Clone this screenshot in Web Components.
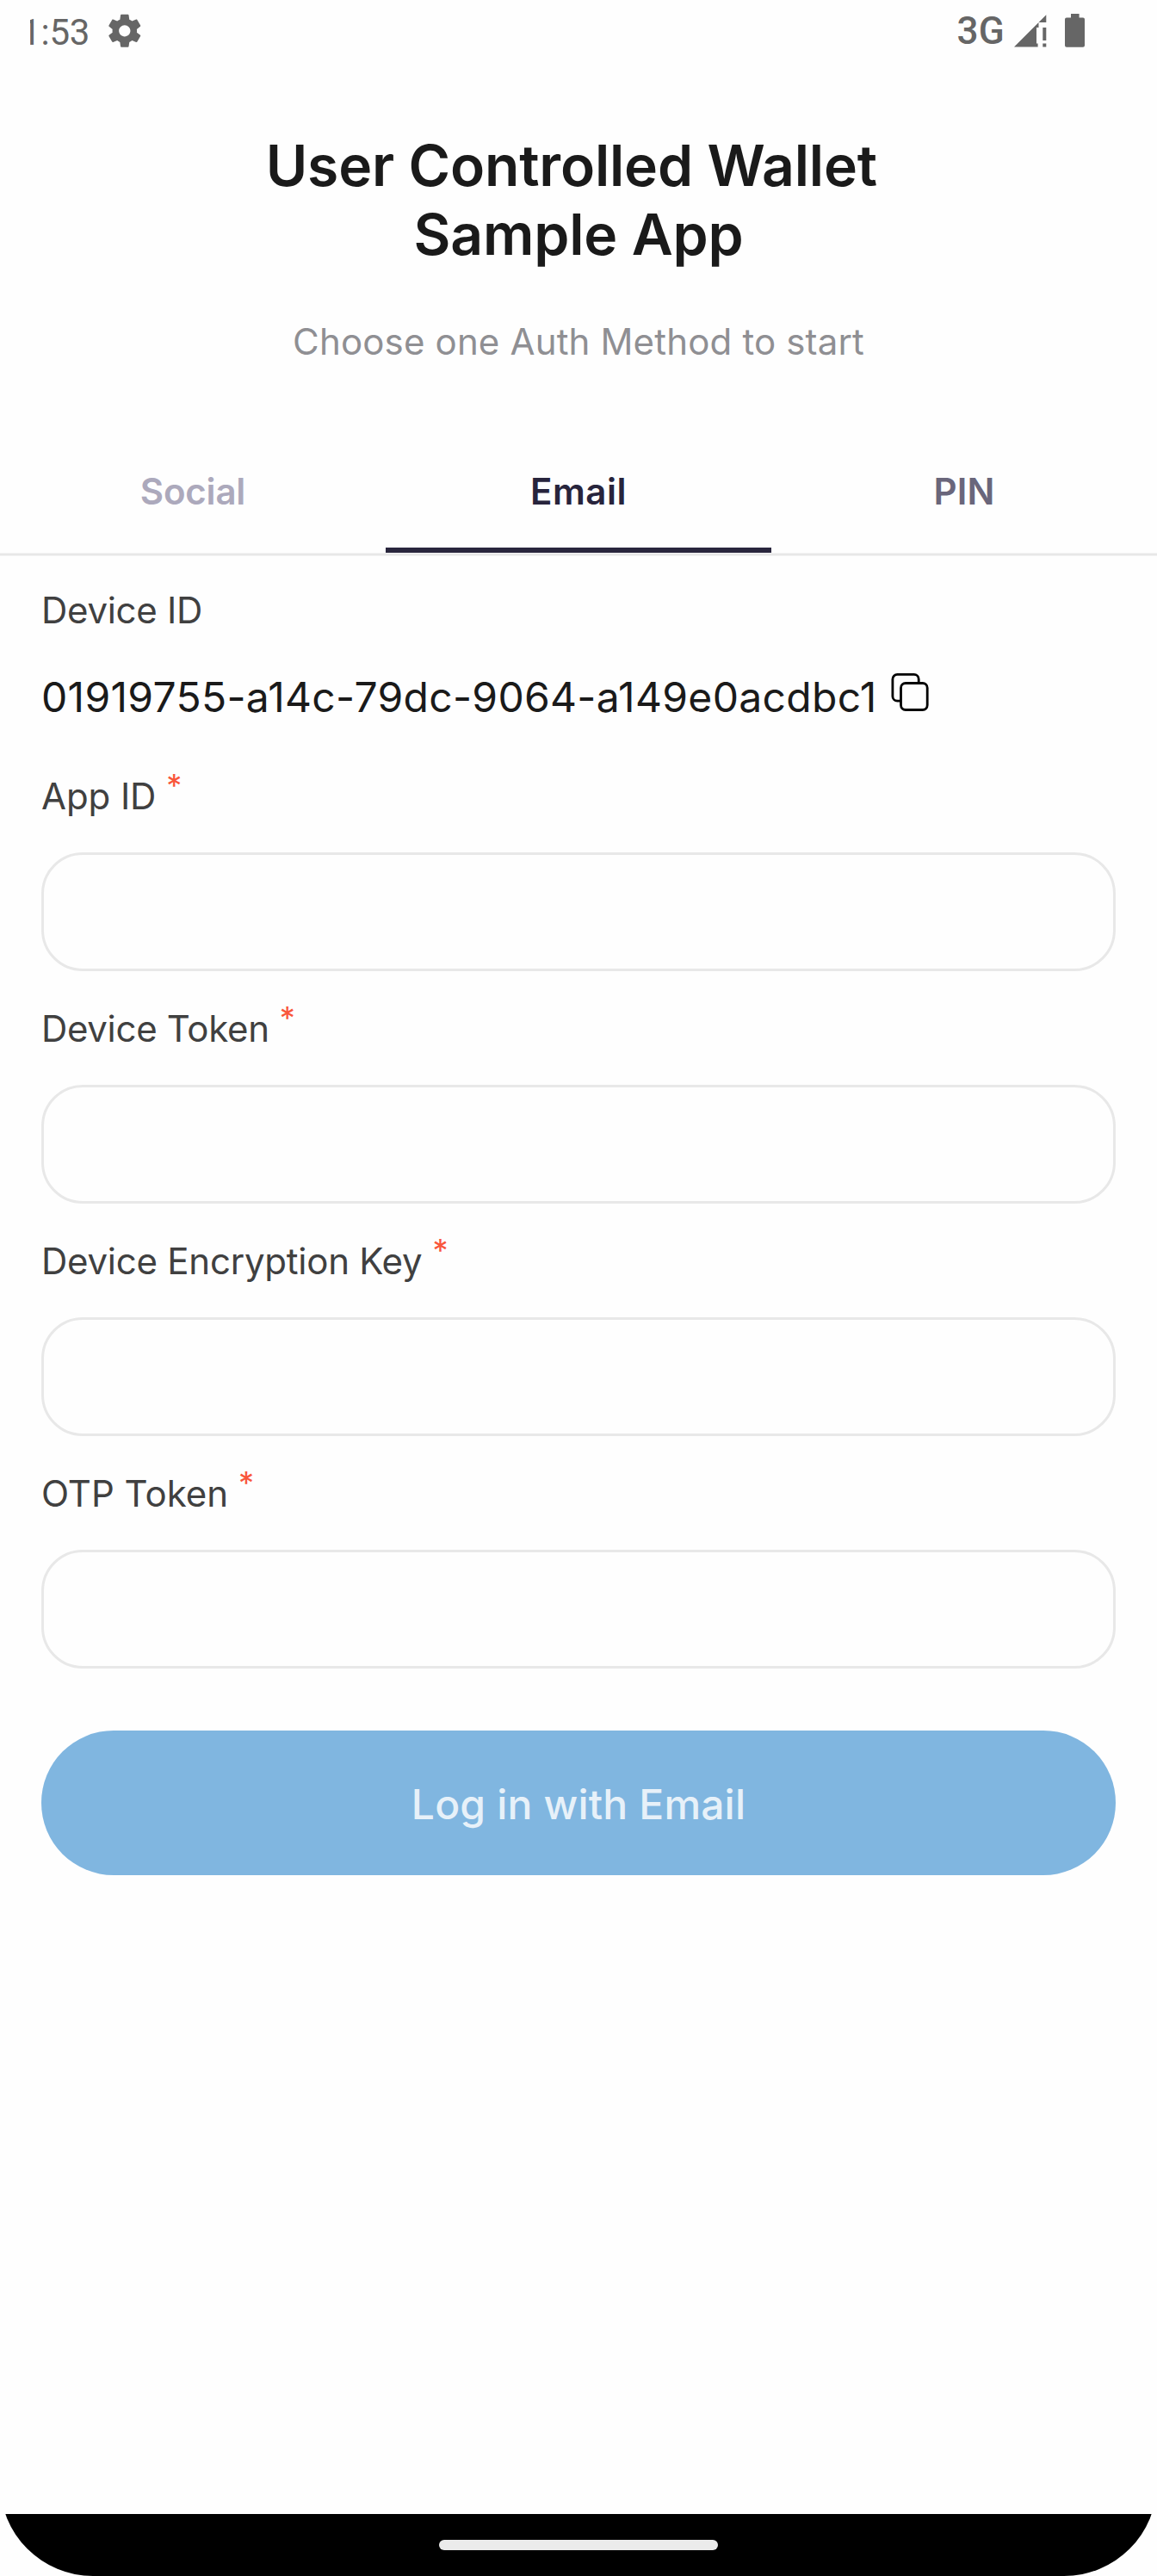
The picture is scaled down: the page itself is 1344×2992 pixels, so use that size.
<!DOCTYPE html>
<html lang="en">
<head>
<meta charset="utf-8">
<title>User Controlled Wallet Sample App</title>
<style>
  html, body { margin: 0; padding: 0; background: #fefefe; }
  body { width: 1344px; height: 2992px; overflow: hidden; font-family: Inter, "Liberation Sans", sans-serif; }
</style>
</head>
<body>
<wallet-app></wallet-app>
<script>
const define = (name, html) => {
  const template = document.createElement('template');
  template.innerHTML = html;
  customElements.define(name, class extends HTMLElement {
    constructor() {
      super();
      this.attachShadow({ mode: 'open' }).append(template.content.cloneNode(true));
    }
  });
};

define('status-bar', `
<style>
  :host { display: flex; height: 72px; padding: 0 84px 0 35px; justify-content: space-between; color: #666; fill: #666; font: 400 42px/75px Roboto, sans-serif; }
  div { display: flex; height: 72px; }
  .clock { overflow: hidden; letter-spacing: -.2px; }
  .clock span { margin-left: -11px; }
  .gear { margin: 13px 0 0 18px; }
  .net { font-size: 44px; font-weight: 500; letter-spacing: .3px; line-height: 73px; }
  .signal { margin: 16px 0 0 11px; }
  .battery { margin: 16px 0 0 21px; }
  svg { display: block; flex: none; }
</style>
<div><span class="clock"><span>1:53</span></span>
  <svg class="gear" width="45.6" height="45.6" viewBox="0 0 24 24"><path d="M19.43 12.98c.04-.32.07-.64.07-.98s-.03-.66-.07-.98l2.11-1.65c.19-.15.24-.42.12-.64l-2-3.46c-.12-.22-.39-.3-.61-.22l-2.49 1c-.52-.4-1.08-.73-1.69-.98l-.38-2.65C14.46 2.18 14.25 2 14 2h-4c-.25 0-.46.18-.49.42l-.38 2.65c-.61.25-1.17.59-1.69.98l-2.49-1c-.23-.09-.49 0-.61.22l-2 3.46c-.13.22-.07.49.12.64l2.11 1.65c-.04.32-.07.65-.07.98s.03.66.07.98l-2.11 1.65c-.19.15-.24.42-.12.64l2 3.46c.12.22.39.3.61.22l2.49-1c.52.4 1.08.73 1.69.98l.38 2.65c.03.24.24.42.49.42h4c.25 0 .46-.18.49-.42l.38-2.65c.61-.25 1.17-.59 1.69-.98l2.49 1c.23.09.49 0 .61-.22l2-3.46c.12-.22.07-.49-.12-.64l-2.11-1.65zM12 15.5c-1.93 0-3.5-1.57-3.5-3.5s1.57-3.5 3.5-3.5 3.5 1.57 3.5 3.5-1.57 3.5-3.5 3.5z"/></svg>
</div>
<div><span class="net">3G</span>
  <svg class="signal" width="38" height="39" viewBox="0 0 38 39"><path d="M0 38.5 37.3 1.2V10H28.5V16H26V34.5H27.6V38.5ZM33.3 16h4v15h-4zM33.3 34.4h4v4h-4z"/></svg>
  <svg class="battery" width="23" height="39" viewBox="0 0 23 39"><path d="M7 0h9.6v4.4H21a2 2 0 0 1 2 2V36.700a2 2 0 0 1-2 2H2a2 2 0 0 1-2-2V6.400a2 2 0 0 1 2-2H7z"/></svg>
</div>`);

define('page-heading', `
<style>
  :host { display: flex; flex-direction: column; align-items: center; gap: 55px; padding: 80px 0 71px; }
  h1 { margin: 0; font-size: 66px; line-height: 80px; font-weight: 600; letter-spacing: -.17px; color: #1a1a1a; text-align: center; white-space: pre; }
  p { margin: 0; font-size: 42px; line-height: 60px; letter-spacing: .165px; color: #8f8f93; }
</style>
<h1><slot name="title"></slot></h1>
<p><slot></slot></p>`);

define('tab-bar', `
<style>
  :host { display: flex; flex-direction: column; }
  .row { display: grid; grid-template-columns: repeat(3, 1fr); height: 144px; }
  .line { height: 4px; background: linear-gradient(#f3f3f3 25%, #e7e7e7 25% 75%, #f3f3f3 75%); }
</style>
<div class="row"><slot></slot></div>
<div class="line"></div>`);

define('tab-item', `
<style>
  :host { display: flex; box-sizing: border-box; height: 144px; justify-content: center; padding-top: 43px; font-size: 42px; line-height: 60px; font-weight: 600; color: #6a667b; letter-spacing: .2px; }
  :host([disabled]) { color: #aca9bc; letter-spacing: -.19px; }
  :host([selected]) { color: #27243c; border-bottom: 6px solid #29263d; letter-spacing: .5px; }
</style>
<slot></slot>`);

define('field-label', `
<style>
  :host { display: flex; align-items: flex-start; gap: 12px; height: 60px; font-size: 42px; line-height: 60px; color: #404040; }
  sup { display: none; font-size: 36px; line-height: 34px; color: #f9563b; vertical-align: baseline; }
  :host([required]) sup { display: block; }
</style>
<span><slot></slot></span><sup>*</sup>`);

define('copy-icon', `
<style>:host { display: block; } svg { display: block; }</style>
<svg width="44" height="44" viewBox="0 0 44 44" fill="none" stroke="#000" stroke-width="2.8">
  <rect x="11.500" y="11.500" width="30.700" height="31" rx="5.500"/>
  <path d="M11.500 32.200H7.400A5.500 5.500 0 0 1 1.900 26.700V6.900A5.500 5.500 0 0 1 7.400 1.400H26.700A5.500 5.500 0 0 1 32.200 6.900V11.500"/>
</svg>`);

define('device-id', `
<style>
  :host { display: flex; flex-direction: column; gap: 41px; }
  .value { display: flex; align-items: flex-start; gap: 16px; height: 60px; font-size: 48px; line-height: 60px; letter-spacing: .31px; color: #1a1a1a; }
  copy-icon { margin-top: 2px; }
</style>
<field-label style="letter-spacing:-.29px">Device ID</field-label>
<div class="value"><span><slot></slot></span><copy-icon></copy-icon></div>`);

define('text-field', `
<style>
  :host { display: flex; flex-direction: column; gap: 35px; }
  input { display: block; box-sizing: border-box; width: 100%; height: 138px; margin: 0; padding: 0 45px; border: 3px solid #e8e8e8; border-radius: 48px; background: transparent; font: 400 48px Inter, sans-serif; color: #1a1a1a; outline: none; }
</style>
<field-label required><slot></slot></field-label>
<input type="text">`);

define('primary-button', `
<style>
  :host { display: block; }
  button { display: flex; align-items: center; justify-content: center; width: 100%; height: 168px; margin: 0; padding: 4px 0 0; border: 0; border-radius: 84px; background: #80b6e0; color: #e7f1f9; font: 500 48px/60px Inter, sans-serif; letter-spacing: .17px; }
</style>
<button type="button"><slot></slot></button>`);

define('gesture-bar', `
<style>
  :host { display: flex; justify-content: center; box-sizing: border-box; height: 72px; padding-top: 30px; background: #000; clip-path: inset(-36px 0 0 0 round 0 0 108px 108px); }
  i { width: 324px; height: 12px; border-radius: 6px; background: #ebebeb; }
</style>
<i></i>`);

define('wallet-app', `
<style>
  :host { display: flex; flex-direction: column; width: 1344px; height: 2992px; background: #fefefe; }
  main { display: flex; flex-direction: column; gap: 37px; padding: 33px 48px 0; flex: 1; }
  device-id { margin-bottom: 18px; }
  primary-button { margin-top: 35px; }
</style>
<status-bar></status-bar>
<page-heading><span slot="title">User Controlled Wallet 
Sample App</span>Choose one Auth Method to start</page-heading>
<tab-bar><tab-item disabled>Social</tab-item><tab-item selected>Email</tab-item><tab-item>PIN</tab-item></tab-bar>
<main>
  <device-id>01919755-a14c-79dc-9064-a149e0acdbc1</device-id>
  <text-field style="letter-spacing:-.08px">App ID</text-field>
  <text-field style="letter-spacing:-.32px">Device Token</text-field>
  <text-field style="letter-spacing:-.24px">Device Encryption Key</text-field>
  <text-field>OTP Token</text-field>
  <primary-button>Log in with Email</primary-button>
</main>
<gesture-bar></gesture-bar>`);
</script>
</body>
</html>
